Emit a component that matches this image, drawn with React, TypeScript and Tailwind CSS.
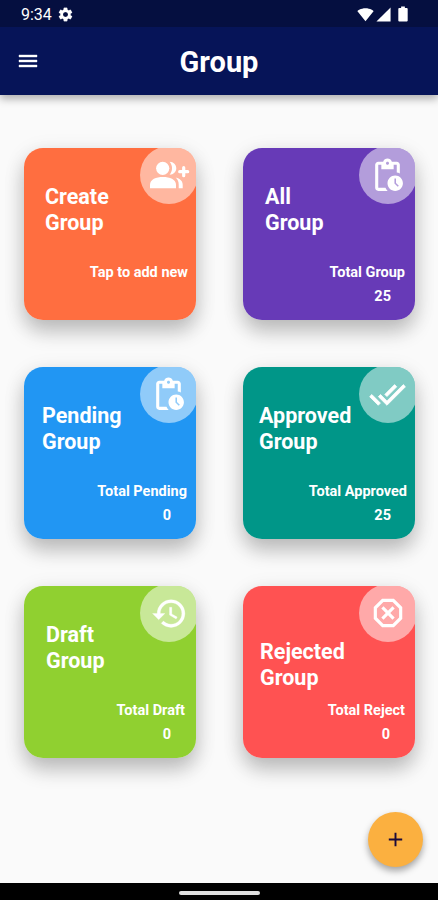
import React from 'react'
import {
  MdAdd,
  MdBatteryFull,
  MdDoneAll,
  MdHistory,
  MdMenu,
  MdOutlineDangerous,
  MdPendingActions,
  MdSettings,
  MdSignalCellular4Bar,
  MdSignalWifi4Bar,
} from 'react-icons/md'

interface GroupCardInfo {
  id: string
  title: string
  label: string
  count?: number
  icon: React.ComponentType<React.SVGProps<SVGSVGElement>>
  iconClass: string
  color: string
  titleClass: string
  labelClass: string
  countClass?: string
}

function GroupAddIcon(props: React.SVGProps<SVGSVGElement>) {
  return (
    <svg viewBox="0 0 38 38" fill="currentColor" {...props}>
      <circle cx="12.7" cy="12.3" r="6.6" />
      <path d="M0 32.3v-3.5C0 23.4 6 21 12.9 21S26 23.4 26 28.8v3.5z" />
      <path d="M19.6 5.8c3.9.2 6.7 3 6.7 6.5s-2.8 6.3-6.7 6.5c3.3-3.9 3.3-9.1 0-13z" />
      <path d="M25.6 21.6c4.4 1 7.1 3.6 7.1 7.2v3.5h-4v-3.5c0-3-.9-5.3-3.1-7.2z" />
      <path d="M33.7 11.7v8M29.7 15.7h8" fill="none" stroke="currentColor" strokeWidth="3.2" strokeLinecap="round" />
    </svg>
  )
}

const CARDS: GroupCardInfo[] = [
  { id: 'create', title: 'Create', label: 'Tap to add new', icon: GroupAddIcon, iconClass: 'size-[38px] overflow-visible', color: 'bg-[#ff6e40]', titleClass: 'pt-[36px] pl-[21px]', labelClass: 'pr-[8px]' },
  { id: 'all', title: 'All', label: 'Total Group', count: 25, icon: MdPendingActions, iconClass: 'mr-[2px] size-[37px] stroke-0', color: 'bg-[#673ab7]', titleClass: 'pt-[36px] pl-[22px]', labelClass: 'pr-[10px]', countClass: 'pr-[24px]' },
  { id: 'pending', title: 'Pending', label: 'Total Pending', count: 0, icon: MdPendingActions, iconClass: 'mr-[2px] size-[37px] stroke-0', color: 'bg-[#2196f3]', titleClass: 'pt-[36px] pl-[18px]', labelClass: 'pr-[9px]', countClass: 'pr-[25px]' },
  { id: 'approved', title: 'Approved', label: 'Total Approved', count: 25, icon: MdDoneAll, iconClass: 'mr-[1px] size-[37px] stroke-[0.5] [&>path[fill=none]]:stroke-none', color: 'bg-[#009688]', titleClass: 'pt-[36px] pl-[16px]', labelClass: 'pr-[8px]', countClass: 'pr-[24px]' },
  { id: 'draft', title: 'Draft', label: 'Total Draft', count: 0, icon: MdHistory, iconClass: 'size-[37px] stroke-[0.2] [&>path[fill=none]]:stroke-none', color: 'bg-[#90d030]', titleClass: 'pt-[36px] pl-[22px]', labelClass: 'pr-[11px]', countClass: 'pr-[25px]' },
  { id: 'rejected', title: 'Rejected', label: 'Total Reject', count: 0, icon: MdOutlineDangerous, iconClass: 'mr-[1px] size-[38px] stroke-0', color: 'bg-[#ff5252]', titleClass: 'pt-[53px] pl-[17px]', labelClass: 'pr-[10px]', countClass: 'pr-[25px]' },
]

function StatusBar() {
  return (
    <div className="flex h-[27px] items-center justify-between bg-[#050f40] pt-[1px] pr-[26px] pl-[21px] text-white">
      <div className="flex items-center gap-[5px]">
        <span className="pt-[1px] text-[16px] leading-none">9:34</span>
        <MdSettings className="size-[17px] stroke-[0.3] [&>path[fill=none]]:stroke-none" />
      </div>
      <div className="flex items-center">
        <MdSignalWifi4Bar className="size-[17px]" />
        <MdSignalCellular4Bar className="ml-[1px] size-[17px]" />
        <MdBatteryFull className="ml-[2px] size-[18px] scale-x-125" />
      </div>
    </div>
  )
}

function AppBar() {
  return (
    <header className="grid h-[68px] grid-cols-[1fr_auto_1fr] items-center bg-[#061458] px-[16px] text-white">
      <button aria-label="Menu" className="w-fit">
        <MdMenu className="size-[24px] stroke-[0.4] [&>path[fill=none]]:stroke-none" />
      </button>
      <h1 className="pt-[2px] text-[29px] leading-none font-bold">Group</h1>
    </header>
  )
}

function GroupCard({ card }: { card: GroupCardInfo }) {
  const Icon = card.icon
  return (
    <button className={`relative flex h-[172px] w-[172px] flex-col overflow-hidden rounded-[19px] text-left font-bold text-white ${card.color}`}>
      <span className="absolute -top-[2px] -right-[2px] flex size-[58px] items-center justify-center rounded-[29px] rounded-tr-[12px] bg-white/50">
        <Icon className={card.iconClass} strokeLinejoin="round" />
      </span>
      <span className={`text-[21.5px] leading-[25.5px] ${card.titleClass}`}>
        {card.title}
        <br />
        Group
      </span>
      <span className="mt-auto flex h-[56px] w-full flex-col items-end text-[14.5px] leading-[18px]">
        <span className={card.labelClass}>{card.label}</span>
        {card.count !== undefined && <span className={`mt-[6px] ${card.countClass}`}>{card.count}</span>}
      </span>
    </button>
  )
}

export default function App() {
  return (
    <div className="flex h-[900px] w-[438px] flex-col overflow-hidden bg-[#fafafa] font-[Roboto,sans-serif]">
      <div className="shadow-[0_4px_8px_rgba(0,0,0,0.3)]">
        <StatusBar />
        <AppBar />
      </div>
      <main className="flex flex-1 flex-col">
        <div className="grid grid-cols-[172px_172px] gap-[47px] pt-[53px] pl-[24px]">
          {CARDS.map(card => (
            <div key={card.id} className="rounded-[19px] shadow-[0_12px_20px_rgba(0,0,0,0.2),0_5px_22px_rgba(0,0,0,0.1)]">
              <GroupCard card={card} />
            </div>
          ))}
        </div>
        <button
          aria-label="Add group"
          className="mt-auto mr-[15px] mb-[16px] flex size-[55px] items-center justify-center self-end rounded-full bg-[#fbb040] text-[#1c0a3a] shadow-[0_4px_7px_rgba(0,0,0,0.35)]"
        >
          <MdAdd className="size-[23px]" />
        </button>
      </main>
      <footer className="flex h-[17px] items-center justify-center bg-black pt-[2px]">
        <div className="h-[4px] w-[81px] rounded-full bg-[#e0e0e0]" />
      </footer>
    </div>
  )
}
